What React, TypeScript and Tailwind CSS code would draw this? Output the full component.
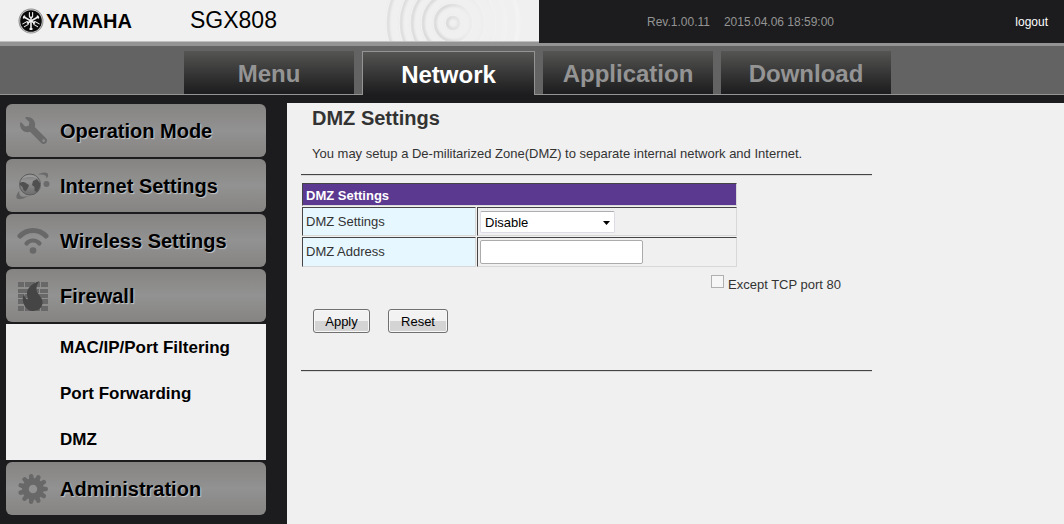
import { useState } from "react";
import type { ReactNode } from "react";
import { FaWrench } from "react-icons/fa";

const TABS = ["Menu", "Network", "Application", "Download"];

const FIREWALL_LINKS = ["MAC/IP/Port Filtering", "Port Forwarding", "DMZ"];

function YamahaMark() {
  return (
    <svg width="26" height="26" viewBox="0 0 26 26" aria-hidden="true">
      <circle cx="13" cy="13" r="12.5" fill="#8f8f8f" />
      <circle cx="13" cy="13" r="11.5" fill="#d0d0d0" />
      <circle cx="13" cy="13" r="10.8" fill="#0a0a0a" />
      {/* three crossed tuning forks */}
      {[0, 120, 240].map((angle) => (
        <g
          key={angle}
          transform={`rotate(${angle} 13 13)`}
          fill="none"
          stroke="#f0f0f0"
          strokeLinecap="round"
        >
          <path d="M13 21V9" strokeWidth="1.6" />
          <path d="M11.400 4.500v4c0 1.600 3.200 1.600 3.200 0v-4" strokeWidth="1.1" />
          <path d="M12.200 21h1.600" strokeWidth="1.8" />
        </g>
      ))}
    </svg>
  );
}

function Ripples() {
  return (
    <svg width="154" height="41" viewBox="0 0 154 41" aria-hidden="true">
      <defs>
        {/* page-space gradient, so the outer rings fade out to the right */}
        <linearGradient id="fade" gradientUnits="userSpaceOnUse" x1="0" y1="0" x2="136" y2="0">
          <stop offset="0" stopColor="#dcdcdc" />
          <stop offset="0.45" stopColor="#d6d6d6" />
          <stop offset="0.6" stopColor="#ebebeb" />
          <stop offset="1" stopColor="#f5f5f5" />
        </linearGradient>
        <filter id="soften">
          <feGaussianBlur stdDeviation="1.3" />
        </filter>
      </defs>
      <g fill="none" stroke="url(#fade)" strokeWidth="3" filter="url(#soften)">
        {[65, 52, 41, 30, 18, 6].map((r) => (
          <circle key={r} cx="68" cy="23" r={r} />
        ))}
      </g>
      <g fill="none" stroke="#f3f3f3">
        {[67, 54, 43, 32, 20, 8].map((r) => (
          <circle key={r} cx="68" cy="23" r={r} />
        ))}
      </g>
    </svg>
  );
}

function GlobeIcon() {
  return (
    <svg className="shrink-0" width="34" height="28" viewBox="0 0 34 28" aria-hidden="true">
      <defs>
        <linearGradient id="globe" x2="0" y2="1">
          <stop offset="0" stopColor="#777" />
          <stop offset="0.35" stopColor="#939393" />
          <stop offset="1" stopColor="#6c6c6c" />
        </linearGradient>
      </defs>
      <path
        d="M22 2.500C28-.5 33 0 32 4c-.2 1-.8 2-1.600 2.800C31 3 28 2 22 2.500zM3.500 18.500C-1 24-1 28 5 27c3-.5 6-2 8-3.200-5 1.800-11 2-9.500-5.300z"
        fill="#6b6b6b"
      />
      <circle cx="14" cy="12.500" r="10.500" fill="url(#globe)" stroke="#5c5c5c" />
      <path
        d="M4 11c2-1.500 5-1 6.500.5l2.500 1.500-1 3-2.500 3.500-2-1.500-1-3L4 13zM17 9l4-2 3 4v4l-3 5-2.500-1v-4L16 13z"
        fill="#505050"
      />
      <path d="M6 6.500c3-5 13-5 16 0-5-2-11-2-16 0z" fill="#b4b4b4" opacity="0.5" />
      <circle cx="30.500" cy="12" r="3" fill="#6b6b6b" />
    </svg>
  );
}

function WifiIcon() {
  return (
    <svg
      className="shrink-0"
      width="32"
      height="28"
      viewBox="0 0 32 28"
      fill="none"
      stroke="#686868"
      strokeLinecap="round"
      aria-hidden="true"
    >
      <path d="M3 9c7-7.500 19-7.500 26 0" strokeWidth="5" />
      <path d="M9.500 16.500c3.500-4 9.500-4 13 0" strokeWidth="4.200" />
      <circle cx="16" cy="23.500" r="3.300" fill="#686868" stroke="none" />
    </svg>
  );
}

function FirewallIcon() {
  return (
    <svg className="shrink-0" width="30" height="30" viewBox="0 0 30 30" aria-hidden="true">
      <path
        d="M0 1h6v5H0zM7 1h10v5H7zM18 1h4v5h-4zM23 1h7v5h-7zM0 8h10v4H0zM11 8h10v4H11zM22 8h8v4h-8zM0 13h6v4H0zM7 13h12v4H7zM20 13h10v4H20zM0 18h10v5H0zM11 18h11v5H11zM23 18h7v5h-7zM0 25h6v5H0zM7 25h10v5H7zM18 25h4v5h-4zM23 25h7v5h-7z"
        fill="#686868"
      />
      <path
        d="M21.500 0C13 3 8.500 8 9 13c.2 2.500 1.200 4 .5 6C7.500 17.500 6.500 15.500 6 13c-2 4-1.500 8 .5 11.500C8.500 28 11 30 15 30c6 0 10-4 9.500-9.500C24 16 19 13 18.500 9 18.200 5.500 19.500 2.500 21.500 0z"
        fill="#454545"
      />
    </svg>
  );
}

function GearIcon() {
  const teeth = Array.from({ length: 11 }, (_, i) => (i * 360) / 11 - 8);
  return (
    <svg className="shrink-0" width="32" height="32" viewBox="0 0 32 32" aria-hidden="true">
      {teeth.map((angle) => (
        <path
          key={angle}
          d="M13.200 8L14 1.800Q16 0 18 1.800L18.800 8z"
          fill="#686868"
          transform={`rotate(${angle} 16 16)`}
        />
      ))}
      <circle cx="16" cy="16" r="7.500" fill="none" stroke="#686868" strokeWidth="6.500" />
    </svg>
  );
}

function SideItem({ icon, label }: { icon: ReactNode; label: string }) {
  return (
    <a
      href="#"
      className="flex h-[53px] items-center gap-3 rounded-md bg-linear-to-b from-[#868482] via-[#929292] to-[#868482] pl-3 text-[20px] font-bold text-black [text-shadow:1px_1px_1px_#c8c8c8]"
    >
      <span className="flex w-[30px] shrink-0 justify-center">{icon}</span>
      {label}
    </a>
  );
}

const CELL = "border border-t-[#444] border-r-[#d8d8d8] border-b-[#d8d8d8] border-l-[#444]";

const BUTTON =
  "h-6 rounded-[3px] border border-[#707070] bg-linear-to-b from-[#f2f2f2] from-50% to-[#d4d4d4] to-50% pt-px text-[13px] text-black shadow-[inset_0_0_0_1px_#f8f8f8]";

export default function App() {
  const [mode, setMode] = useState("Disable");
  const [address, setAddress] = useState("");

  return (
    <div className="flex min-h-screen flex-col bg-[#1c1c1e] font-['Liberation_Sans',Arial,sans-serif] text-[13px] text-[#333]">
      {/* Header */}
      <header className="flex border-b-3 border-[#949494]">
        <div className="w-[539px] border-b border-[#949494]">
          <div className="flex h-[42px] items-center border-b border-[#c0c0c0] bg-[#f0f0f0]">
            <div className="flex items-center gap-[2px] pl-[18px]">
              <YamahaMark />
              <span className="w-[142px] text-[20px] font-bold text-black">YAMAHA</span>
              <span className="text-[23px] text-black">SGX808</span>
            </div>
            <div className="ml-auto">
              <Ripples />
            </div>
          </div>
        </div>
        <div className="flex flex-1 items-center justify-between pr-4 pl-[108px] text-[12px]">
          <div className="flex gap-[14px] text-[#949494]">
            <span>Rev.1.00.11</span>
            <span>2015.04.06 18:59:00</span>
          </div>
          <a href="#" className="text-white">
            logout
          </a>
        </div>
      </header>

      {/* Tabs */}
      <nav className="flex gap-2 border-b border-[#949494] bg-[#636363] pt-[5px] pl-[184px] text-[24px] font-bold">
        {TABS.map((tab) =>
          tab === "Network" ? (
            <a
              key={tab}
              href="#"
              className="-mb-px flex h-11 w-[173px] items-center justify-center border border-b-0 border-[#949494] bg-linear-to-b from-[#555553] to-[#1c1c1e] pt-[2px] text-white"
            >
              {tab}
            </a>
          ) : (
            <a
              key={tab}
              href="#"
              className="flex h-[43px] w-[170px] items-center justify-center bg-linear-to-b from-[#555553] to-[#1c1c1e] pt-[2px] text-[#949494]"
            >
              {tab}
            </a>
          )
        )}
      </nav>

      <div className="flex flex-1 pt-2">
        {/* Sidebar */}
        <aside className="flex w-[287px] shrink-0 flex-col gap-[2px] pt-px pr-[21px] pb-2 pl-[6px]">
          <SideItem icon={<FaWrench size={27} color="#6b6b6b" className="-scale-x-100" />} label="Operation Mode" />
          <SideItem icon={<GlobeIcon />} label="Internet Settings" />
          <SideItem icon={<WifiIcon />} label="Wireless Settings" />
          <SideItem icon={<FirewallIcon />} label="Firewall" />
          <ul className="flex flex-col gap-6 bg-[#f0f0f0] pt-[13px] pb-[9px] pl-[54px] text-[17px] leading-[22px] font-bold text-black">
            {FIREWALL_LINKS.map((link) => (
              <li key={link}>
                <a href="#">{link}</a>
              </li>
            ))}
          </ul>
          <SideItem icon={<GearIcon />} label="Administration" />
        </aside>

        {/* Content */}
        <main className="flex-1 bg-[#f0f0f0] px-[14px]">
          <form className="max-w-[571px]" onSubmit={(e) => e.preventDefault()}>
            <h1 className="pt-[3px] pl-[11px] text-[20px] leading-6 font-bold">DMZ Settings</h1>
            <p className="pt-4 pb-3 pl-[11px] leading-4">
              You may setup a De-militarized Zone(DMZ) to separate internal network and Internet.
            </p>
            <hr className="h-[2px] border-t border-b border-t-[#444] border-b-[#d8d8d8]" />

            <table className="mt-[6px] w-[437px] border-separate border-spacing-[1px] text-left">
              <thead>
                <tr>
                  <th
                    colSpan={2}
                    className={`${CELL} h-[23px] bg-[#5c3990] px-[3px] pt-[2px] leading-4 font-bold text-white`}
                  >
                    DMZ Settings
                  </th>
                </tr>
              </thead>
              <tbody>
                <tr>
                  <td className={`${CELL} h-[29px] w-[174px] bg-[#e6f7ff] px-[3px]`}>
                    <label htmlFor="dmz-mode">DMZ Settings</label>
                  </td>
                  <td className={`${CELL} p-[2px]`}>
                    <div className="relative w-[135px]">
                      <select
                        id="dmz-mode"
                        value={mode}
                        onChange={(e) => setMode(e.target.value)}
                        className="block h-[22px] w-full appearance-none rounded-xs border border-[#dcdce4] border-t-[#abadb3] bg-white pt-px pl-1 text-[13px] text-black"
                      >
                        <option>Disable</option>
                        <option>Enable</option>
                      </select>
                      <svg
                        className="pointer-events-none absolute top-[10px] right-[5px]"
                        width="7"
                        height="4"
                        viewBox="0 0 7 4"
                        aria-hidden="true"
                      >
                        <path d="M0 0h7L3.500 4z" fill="#000" />
                      </svg>
                    </div>
                  </td>
                </tr>
                <tr>
                  <td className={`${CELL} h-[30px] bg-[#e6f7ff] px-[3px]`}>
                    <label htmlFor="dmz-address">DMZ Address</label>
                  </td>
                  <td className={`${CELL} p-[2px]`}>
                    <input
                      id="dmz-address"
                      type="text"
                      value={address}
                      onChange={(e) => setAddress(e.target.value)}
                      className="block h-6 w-[163px] rounded-xs border border-[#ababab] bg-white px-1 text-black"
                    />
                  </td>
                </tr>
              </tbody>
            </table>

            <div className="flex items-start justify-end gap-1 pt-[7px] pr-[31px]">
              <input
                id="except-port"
                type="checkbox"
                className="size-[13px] appearance-none border border-[#b0b0b0] bg-[#f6f6f6] checked:bg-[#5c3990]"
              />
              <label htmlFor="except-port" className="pt-[2px] leading-4">
                Except TCP port 80
              </label>
            </div>

            <div className="flex gap-[18px] pt-4 pb-[37px] pl-3">
              <button type="submit" className={`${BUTTON} w-[57px]`}>
                Apply
              </button>
              <button type="reset" className={`${BUTTON} w-[60px]`}>
                Reset
              </button>
            </div>
            <hr className="h-[2px] border-t border-b border-t-[#444] border-b-[#d8d8d8]" />
          </form>
        </main>
      </div>
    </div>
  );
}
